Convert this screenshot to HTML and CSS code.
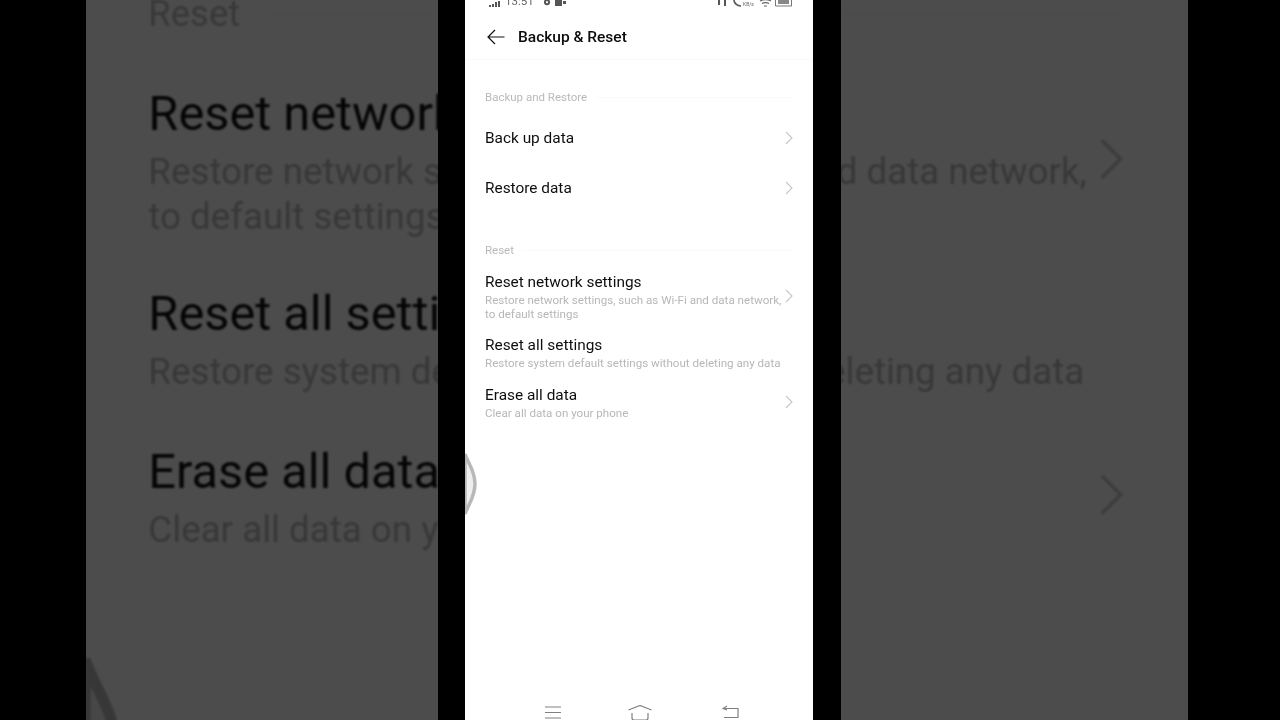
FILE: index.html
```html
<!DOCTYPE html>
<html lang="en">
<head>
<meta charset="utf-8">
<title>Backup &amp; Reset</title>
<link rel="stylesheet" href="styles.css">
</head>
<body>
<main class="stage">
  <div class="backdrop" aria-hidden="true">
    <div class="screen screen-zoomed">
      <header class="appbar"><span class="appbar-title">Backup &amp; Reset</span></header>
      <section class="group group-first">
        <div class="label"><span>Backup and Restore</span><i class="rule"></i></div>
        <div class="row"><div class="row-text"><div class="title">Back up data</div></div><svg class="chev" viewBox="0 0 8 14"><path d="M1 1l6 6-6 6"/></svg></div>
        <div class="row"><div class="row-text"><div class="title">Restore data</div></div><svg class="chev" viewBox="0 0 8 14"><path d="M1 1l6 6-6 6"/></svg></div>
      </section>
      <section class="group group-second">
        <div class="label"><span>Reset</span><i class="rule"></i></div>
        <div class="row row-tall"><div class="row-text"><div class="title">Reset network settings</div><div class="sub">Restore network settings, such as Wi-Fi and data network, to default settings</div></div><svg class="chev" viewBox="0 0 8 14"><path d="M1 1l6 6-6 6"/></svg></div>
        <div class="row row-two"><div class="row-text"><div class="title">Reset all settings</div><div class="sub">Restore system default settings without deleting any data</div></div></div>
        <div class="row row-two"><div class="row-text"><div class="title">Erase all data</div><div class="sub">Clear all data on your phone</div></div><svg class="chev" viewBox="0 0 8 14"><path d="M1 1l6 6-6 6"/></svg></div>
      </section>
      <svg class="bubble" viewBox="0 0 14 66"><path d="M0 3C3 12 10 20 10 33S3 54 0 63z"/></svg>
    </div>
  </div>

  <div class="front">
    <div class="screen">
      <div class="status">
        <div class="status-left">
          <svg class="st-signal" viewBox="0 0 12 6"><path d="M0 4h2v2H0zM3 3h2v3H3zM6 1h2v5H6zM9 0h2v6H9z"/></svg>
          <span class="time">13:51</span>
          <svg class="st-gear" viewBox="0 0 9 7"><circle cx="4.500" cy="2" r="3.400"/><circle cx="4.500" cy="2" r="1.200" fill="#fff"/></svg>
          <svg class="st-msg" viewBox="0 0 11 7"><path d="M0 0h7v6H0zM8 1h3v3H8z"/></svg>
        </div>
        <div class="status-right">
          <svg class="st-arrows" viewBox="0 0 12 7"><path d="M2 0h2v5H2zM8 0h2v6H8z"/></svg>
          <svg class="st-phone" viewBox="0 0 10 7"><path d="M1 0c0 3 3 6 7 6" fill="none" stroke="#555" stroke-width="1.600"/></svg>
          <span class="speed">KB/s</span>
          <svg class="st-wifi" viewBox="0 0 13 7"><path d="M1 1c3-1.500 8-1.500 11 0M3 3.500c2-1 5-1 7 0M5 6h3" fill="none" stroke="#666" stroke-width="1.200"/></svg>
          <svg class="st-batt" viewBox="0 0 18 7"><path d="M.5-1h16v7H.5z" fill="#fff" stroke="#777"/><path d="M3 0h11v4H3z" fill="#888"/></svg>
        </div>
      </div>
      <header class="appbar">
        <svg class="back" viewBox="0 0 18 16"><path d="M17.500 8H1M8 1 1 8l7 7"/></svg>
        <span class="appbar-title">Backup &amp; Reset</span>
      </header>
      <section class="group group-first">
        <div class="label"><span>Backup and Restore</span><i class="rule"></i></div>
        <div class="row"><div class="row-text"><div class="title">Back up data</div></div><svg class="chev" viewBox="0 0 8 14"><path d="M1 1l6 6-6 6"/></svg></div>
        <div class="row"><div class="row-text"><div class="title">Restore data</div></div><svg class="chev" viewBox="0 0 8 14"><path d="M1 1l6 6-6 6"/></svg></div>
      </section>
      <section class="group group-second">
        <div class="label"><span>Reset</span><i class="rule"></i></div>
        <div class="row row-tall"><div class="row-text"><div class="title">Reset network settings</div><div class="sub">Restore network settings, such as Wi-Fi and data network, to default settings</div></div><svg class="chev" viewBox="0 0 8 14"><path d="M1 1l6 6-6 6"/></svg></div>
        <div class="row row-two"><div class="row-text"><div class="title">Reset all settings</div><div class="sub">Restore system default settings without deleting any data</div></div></div>
        <div class="row row-two"><div class="row-text"><div class="title">Erase all data</div><div class="sub">Clear all data on your phone</div></div><svg class="chev" viewBox="0 0 8 14"><path d="M1 1l6 6-6 6"/></svg></div>
      </section>
      <nav class="navbar">
        <svg class="nav-menu" viewBox="0 0 16 14"><path d="M0 1h16M0 6.500h16M0 12h16"/></svg>
        <svg class="nav-home" viewBox="0 0 24 16"><path d="M.5 5 12 .5 23.500 5M4 8v5q0 2 2 2h12q2 0 2-2V8"/></svg>
        <svg class="nav-back" viewBox="0 0 17 14"><path d="M5 1 1 3.500 5 5M1 3.500h15v9H2"/></svg>
      </nav>
      <svg class="bubble" viewBox="0 0 14 66"><path d="M0 3C3 12 10 20 10 33S3 54 0 63z"/></svg>
    </div>
  </div>
</main>
</body>
</html>
```
FILE: styles.css
```css
* { box-sizing: border-box; }
html, body { margin: 0; height: 100%; background: #000; overflow: hidden; }
body { font-family: Roboto, "Liberation Sans", sans-serif; }

.stage { display: grid; width: 1280px; height: 720px; }

.backdrop {
  grid-area: 1 / 1;
  width: 1102px;
  height: 720px;
  margin-left: 86px;
  overflow: hidden;
  background: #fff;
  filter: blur(0.5px) brightness(0.3);
}
.screen-zoomed {
  transform-origin: 0 0;
  transform: translate(-1px, -778.500px) scale(3.167);
  padding-top: 7px;
}

.front {
  position: relative;
  z-index: 1;
  grid-area: 1 / 1;
  width: 403px;
  height: 720px;
  margin-left: 438px;
  padding-left: 27px;
  background: #000;
}

.screen {
  position: relative;
  display: flex;
  flex-direction: column;
  width: 348px;
  height: 720px;
  background: #fff;
  overflow: hidden;
  filter: blur(0.35px);
}

/* status bar, cut off by the top of the video frame */
.status {
  display: flex;
  justify-content: space-between;
  align-items: flex-end;
  flex: none;
  height: 7px;
  padding: 0 20px 0 24px;
  color: #555;
  overflow: hidden;
}
.status-left, .status-right { display: flex; align-items: flex-end; }
.time { font-size: 11.500px; line-height: 12px; margin: 0 9px 0 4px; color: #666; }
.speed { font-size: 5px; line-height: 5px; width: 13px; color: #666; }
.st-signal { width: 12px; height: 6px; fill: #555; }
.st-gear { width: 8px; height: 7px; fill: #555; margin-right: 4px; }
.st-msg { width: 11px; height: 7px; fill: #555; }
.st-arrows { width: 12px; height: 7px; fill: #555; margin-right: 5px; }
.st-phone { width: 10px; height: 7px; }
.st-wifi { width: 13px; height: 7px; margin: 0 3px; }
.st-batt { width: 18px; height: 7px; }

.appbar {
  display: flex;
  align-items: center;
  flex: none;
  gap: 13px;
  height: 53px;
  padding: 7px 0 0 22px;
  border-bottom: 1px solid #fafafa;
}
.back { width: 18px; height: 16px; fill: none; stroke: #111; stroke-width: 1.2; }
.appbar-title { font-size: 15.500px; font-weight: 500; color: #0c0c0c; }

.group { flex: none; padding: 0 20px; }
.group-first { margin-top: 27px; }
.group-second { margin-top: 27px; }

.label {
  display: flex;
  align-items: center;
  gap: 8px;
  height: 20px;
  font-size: 11.500px;
  color: #b9b9b9;
}
.rule { flex: 1; height: 1px; background: #fafafa; }

.row { display: flex; align-items: center; justify-content: space-between; height: 50px; }
.row-text { flex: 1; min-width: 0; }
.group-first .label + .row { margin-top: 6px; }
.title { font-size: 15.400px; line-height: 22px; color: #0e0e0e; }
.sub { font-size: 11.600px; line-height: 14px; color: #b7b7b7; }
.row-tall { height: 62px; margin-top: 4.500px; }
.row-two { height: 50px; }
.chev { width: 8px; height: 14px; fill: none; stroke: #c6c6c6; stroke-width: 1.1; flex: none; }

.navbar {
  position: absolute;
  left: 0;
  right: 0;
  bottom: 0;
  height: 16px;
  overflow: hidden;
}
.navbar svg { position: absolute; top: 1px; fill: none; stroke: #808080; stroke-width: 1.2; }
.navbar .nav-menu { top: 2px; left: 80px; width: 16px; height: 14px; }
.nav-home { left: 163px; width: 24px; height: 16px; }
.nav-back { left: 257px; width: 17px; height: 14px; }

/* floating edge handle: lies over the list */
.bubble {
  position: absolute;
  left: 0;
  top: 451px;
  width: 14px;
  height: 66px;
  fill: #eeeeee;
  stroke: #b8b8b8;
  stroke-width: 3.500;
}
```
